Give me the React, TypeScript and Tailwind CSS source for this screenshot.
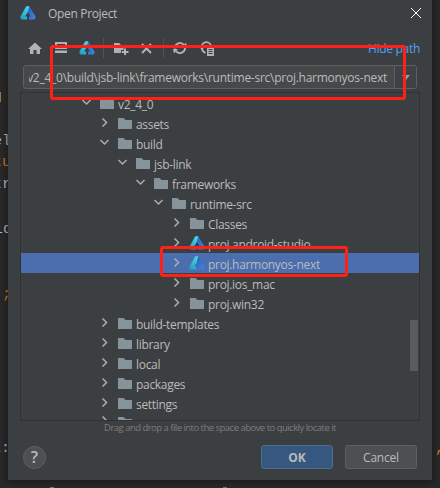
import React from 'react';

type Kind = 'folder' | 'project';
interface Node { name: string; pad: string; open?: boolean; kind?: Kind; selected?: boolean }

const nodes: Node[] = [
  { name: 'v2_4_0', pad: 'pl-[58px]', open: true },
  { name: 'assets', pad: 'pl-[76px]' },
  { name: 'build', pad: 'pl-[76px]', open: true },
  { name: 'jsb-link', pad: 'pl-[94px]', open: true },
  { name: 'frameworks', pad: 'pl-[112px]', open: true },
  { name: 'runtime-src', pad: 'pl-[130px]', open: true },
  { name: 'Classes', pad: 'pl-[148px]' },
  { name: 'proj.android-studio', pad: 'pl-[148px]', kind: 'project' },
  { name: 'proj.harmonyos-next', pad: 'pl-[148px]', kind: 'project', selected: true },
  { name: 'proj.ios_mac', pad: 'pl-[148px]' },
  { name: 'proj.win32', pad: 'pl-[148px]' },
  { name: 'build-templates', pad: 'pl-[76px]' },
  { name: 'library', pad: 'pl-[76px]' },
  { name: 'local', pad: 'pl-[76px]' },
  { name: 'packages', pad: 'pl-[76px]' },
  { name: 'settings', pad: 'pl-[76px]' },
];

function Logo({ id, className = '' }: { id: string; className?: string }) {
  return (
    <svg width="16" height="14" viewBox="0 0 16 14" className={'shrink-0 ' + className}>
      <defs>
        <linearGradient id={id + 'a'} x1="0" y1="1" x2="0.7" y2="0">
          <stop offset="0" stopColor="#159fc4" />
          <stop offset="1" stopColor="#4bd5e5" />
        </linearGradient>
        <linearGradient id={id + 'b'} x1="0" y1="0" x2="1" y2="1">
          <stop offset="0" stopColor="#1c66c9" />
          <stop offset="1" stopColor="#4a80e0" />
        </linearGradient>
      </defs>
      <path d="M6.2 0.3h3L10 2.5 5 10.5H7v3H1.5Q0 13 0.4 10.7z" fill={`url(#${id}a)`} />
      <path d="M9.3 0.3L15.6 10.7q.4 2.3-1.6 2.8H9v-3h1.8L7.8 5.4z" fill={`url(#${id}b)`} />
    </svg>
  );
}

function Folder() {
  return (
    <svg width="14" height="11" viewBox="0 0 14 11" className="shrink-0">
      <path d="M0 0h5.5L7.5 2H14v9H0z" fill="#87939a" />
    </svg>
  );
}

function Chevron({ open }: { open?: boolean }) {
  return (
    <svg width="16" height="16" viewBox="0 0 16 16" fill="none" stroke="#adadad" strokeWidth="1.5" className="shrink-0">
      {open ? <path d="M3.5 5l4 4 4-4" /> : <path d="M5.5 3.5l4 4-4 4" />}
    </svg>
  );
}

function Row({ node, index }: { node: Node; index: number }) {
  return (
    <div className={'flex h-5 shrink-0 items-center ' + node.pad + (node.selected ? ' bg-[#4b6eaf]' : '')}>
      <Chevron open={node.open} />
      <div className="ml-1 flex w-[19px] shrink-0 items-center pl-px">
        {node.kind === 'project' ? <Logo id={'n' + index} className="-ml-px" /> : <Folder />}
      </div>
      <span className="pt-[4px] text-[12px] leading-4 tracking-[-0.31px] whitespace-pre">{node.name}</span>
    </div>
  );
}

function Toolbar() {
  return (
    <div className="flex h-5 items-center pl-5 pr-3">
      <svg width="14" height="13" viewBox="0 0 14 13" className="shrink-0" fill="#afb1b3"><path d="M7 0.5L14 7h-2v5H8.5V8h-3v4H2V7H0z" /></svg>
      <svg width="13" height="12" viewBox="0 0 13 12" className="ml-[13px] shrink-0" fill="#afb1b3"><path d="M0 0h12v2H0zM0 2h2v5H0zM10 2h2v5h-2zM2 5h8v2H2zM0 8.5h12v2.5H0z" /></svg>
      <Logo id="tool" className="ml-[11px]" />
      <div className="ml-2 h-5 w-px bg-[#515151]" />
      <svg width="15" height="14" viewBox="0 0 15 14" className="ml-[10px] shrink-0" fill="#afb1b3"><path d="M0 2h5l2 2h6v3H9.5v2H7v3H0zM10 7.5h2V10h2.5v2H12v2h-2v-2H7.8v-2H10z" /></svg>
      <svg width="11" height="11" viewBox="0 0 11 11" className="ml-3 shrink-0" stroke="#afb1b3" strokeWidth="2"><path d="M1 1l9 9M10 1l-9 9" /></svg>
      <div className="ml-[11px] h-5 w-px bg-[#515151]" />
      <svg width="14" height="14" viewBox="0 0 14 14" className="ml-[9px] shrink-0" fill="none" stroke="#afb1b3" strokeWidth="1.8"><path d="M2 7.5a5 5 0 0 1 9-3.5M12 6.5a5 5 0 0 1-9 3.5" /><path d="M0 8h5L1 12.5zM14 6H9l4-4.5z" fill="#afb1b3" stroke="none" /></svg>
      <svg width="16" height="15" viewBox="0 0 16 15" className="ml-[12px] shrink-0" fill="none" stroke="#afb1b3" strokeWidth="1.8"><path d="M2.7 7A4.7 4.7 0 0 1 12 5M3 8a5 5 0 0 0 3.5 3.8" /><path d="M0 5.5h6L3 9z" fill="#afb1b3" stroke="none" /><path d="M8 6h7v9H8zM9.5 8v1h4V8zM9.5 10v1h4v-1zM9.5 12v1h4v-1z" fill="#afb1b3" fillRule="evenodd" stroke="none" /></svg>
      <span className="ml-auto pt-[2px] text-[12px] leading-4 tracking-[-0.3px] whitespace-nowrap text-[#589df6]">Hide path</span>
    </div>
  );
}

export default function App() {
  return (
    <div className="relative flex h-[488px] w-[440px] items-start overflow-hidden bg-[#292929] px-2 font-['Open_Sans','Noto_Sans',sans-serif] text-[#bbbbbb]">
      <div className="absolute inset-0 overflow-hidden font-['Liberation_Mono',monospace] text-[15px] leading-5">
        <span className="absolute top-[92px] left-0 h-[10px] w-px bg-[#9a7849]" />
        <span className="absolute top-[132px] left-[-7px] text-[#a9b7c6]">el</span>
        <span className="absolute top-[153px] left-[-7px] text-[#cc7832]">tu</span>
        <span className="absolute top-[175px] left-[-7px] text-[#a9b7c6]">tr</span>
        <span className="absolute top-[220px] left-[-6px] text-[#a9b7c6]">ld</span>
        <span className="absolute top-[285px] left-[2px] text-[#cc7832]">;</span>
        <span className="absolute top-[439px] left-[-8px] text-[#a9b7c6]">l:</span>
        <span className="absolute top-[439px] left-[435px] text-[#cc7832]">,</span>
        <span className="absolute top-[487px] left-[50px] h-px w-1 bg-[#777]" />
        <span className="absolute top-[487px] left-[223px] h-px w-1 bg-[#777]" />
      </div>

      <main className="relative flex h-[480px] w-[424px] flex-col bg-[#3c3f41] shadow-[0_1px_7px_2px_rgba(0,0,0,0.35)]">
        <header className="flex h-[38px] shrink-0 items-start pl-3">
          <Logo id="title" className="mt-[6px]" />
          <span className="mt-[6px] ml-3 text-[12px] leading-4 tracking-[-0.33px]">Open Project</span>
          <svg width="12" height="12" viewBox="0 0 12 12" className="mt-[7px] mr-[10px] ml-auto" stroke="#ffffff" strokeWidth="1"><path d="M1 1l10 10M11 1L1 11" /></svg>
        </header>
        <Toolbar />
        <div className="mt-[7px] ml-[15px] flex h-6 w-[394px] shrink-0 overflow-hidden rounded-[3px] border border-[#5e6060] bg-[#45494a]">
          <div className="ml-[5px] flex flex-1 items-center justify-end overflow-hidden pr-[7px]">
            <span className="pt-[2px] text-[12px] leading-4 tracking-[-0.26px] whitespace-nowrap">{'v2_4_0\\build\\jsb-link\\frameworks\\runtime-src\\proj.harmonyos-next'}</span>
          </div>
          <div className="flex w-[22px] items-center justify-center border-l border-[#5e6060] bg-[#3f4244]">
            <svg width="8" height="5" viewBox="0 0 8 5" fill="#9a9da0"><path d="M0 0h8L4 5z" /></svg>
          </div>
        </div>
        <div className="mt-[3px] ml-3 flex h-[329px] w-[400px] shrink-0 overflow-hidden border border-[#323232]">
          <div className="flex flex-1 flex-col">
            {nodes.map((node, i) => <Row key={node.name} node={node} index={i} />)}
            <div className="flex h-[7px] shrink-0 items-start overflow-hidden pl-[76px]">
              <Chevron />
              <div className="mt-[4px] ml-[5px]"><Folder /></div>
            </div>
          </div>
          <div className="absolute top-[320px] right-[14px] h-[51px] w-2 bg-[#595b5d]" />
        </div>
        <p className="h-[15px] text-center text-[9.5px] leading-[14px] tracking-[-0.52px] text-[#7c7c7c]">Drag and drop a file into the space above to quickly locate it</p>
        <footer className="mt-[9px] flex h-6 items-center pr-[15px] pl-[15px]">
          <div className="flex size-[23px] items-center justify-center rounded-full border border-[#5e6060] bg-[#4c5052] text-[16px] leading-none font-semibold">?</div>
          <button className="ml-auto h-6 w-[72px] rounded-[3px] border border-[#4c708c] bg-[#365880] text-[12px] leading-[23px] font-bold">OK</button>
          <button className="ml-3 h-6 w-[72px] rounded-[3px] border border-[#5e6060] bg-[#4c5052] text-[12px] leading-[23px] tracking-[-0.2px]">Cancel</button>
        </footer>
      </main>
      <div className="absolute top-[45px] left-[50px] h-[55px] w-[356px] rounded-[3px] border-3 border-[#ff2115]" />
      <div className="absolute top-[246px] left-[160px] h-[31px] w-[188px] rounded-[3px] border-3 border-[#ff2115]" />
    </div>
  );
}
